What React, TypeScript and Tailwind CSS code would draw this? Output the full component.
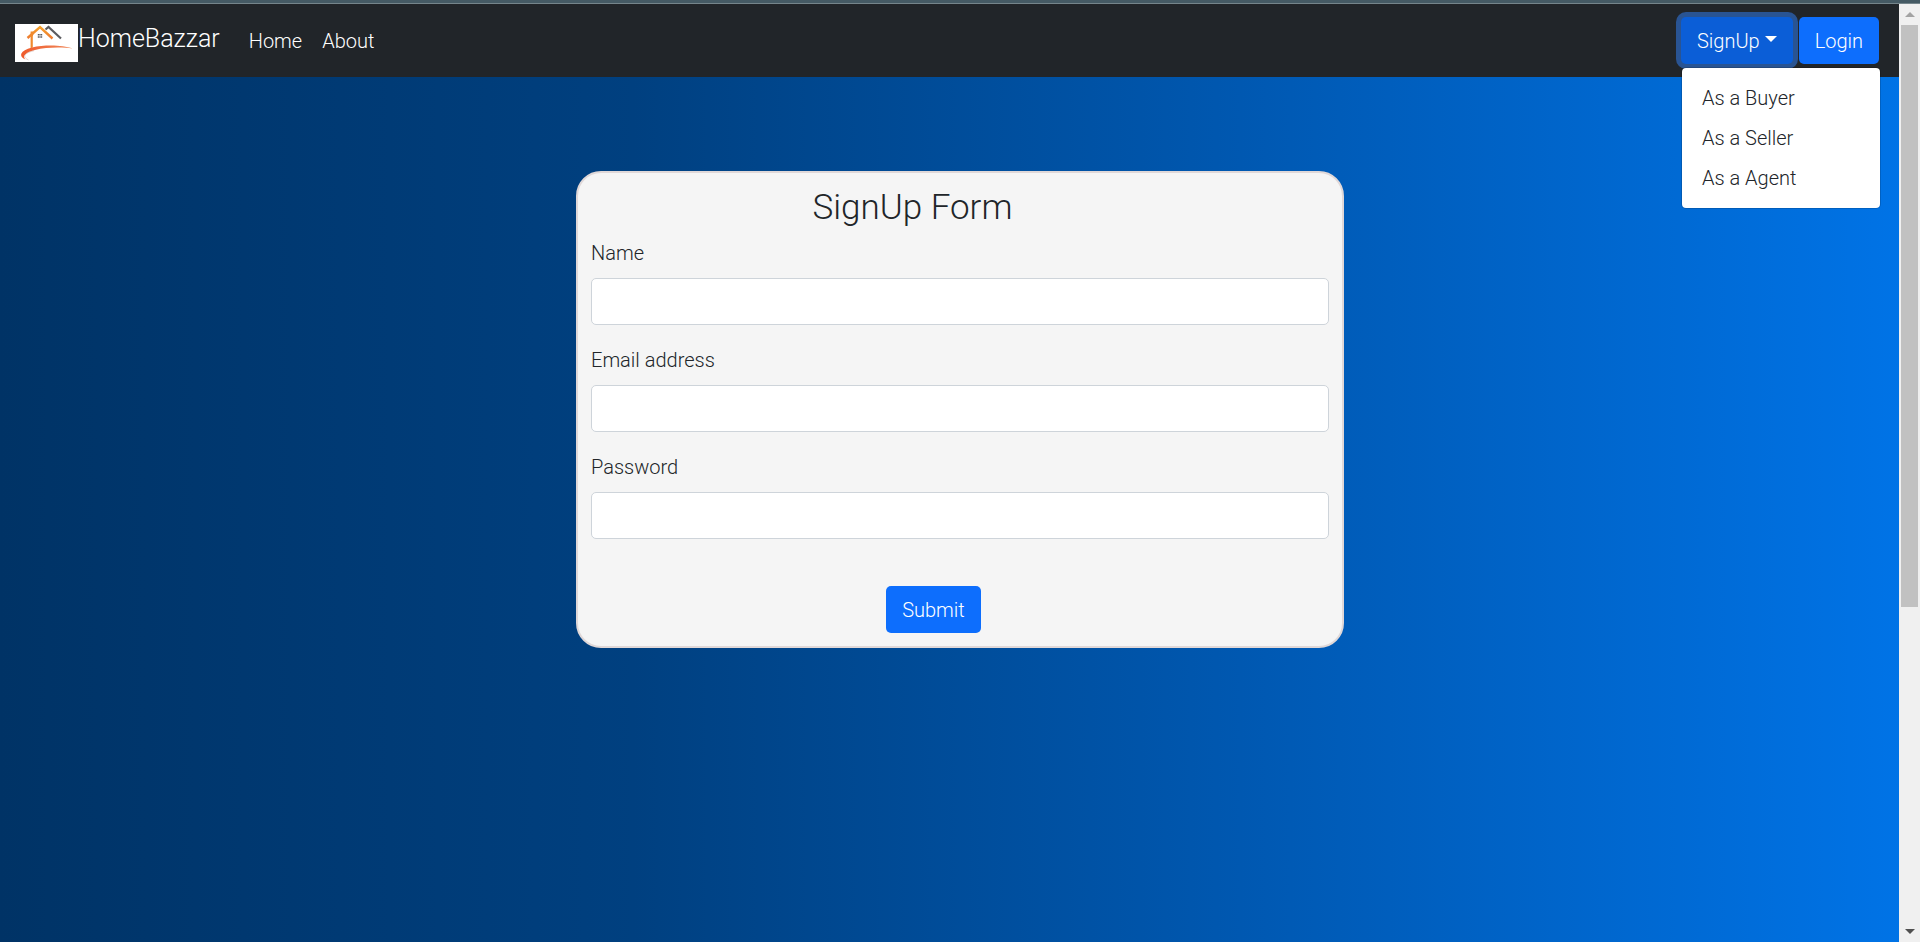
import React from 'react';

const font = "font-['Roboto',sans-serif] font-light";
const primary = 'rounded-[5px] bg-[#0d6efd] px-4 h-[47px] text-xl leading-[30px] font-light text-white';

function Logo() {
  return (
    <svg viewBox="0 0 63 38" className="h-[38px] w-[63px] bg-white" role="img" aria-label="HomeBazzar logo">
      <defs>
        <linearGradient id="roof" x1="0" y1="0" x2="0" y2="1">
          <stop offset="0" stopColor="#f5a02a" />
          <stop offset="1" stopColor="#ee7a30" />
        </linearGradient>
        <linearGradient id="swoosh" x1="0" y1="0" x2="1" y2="0">
          <stop offset="0" stopColor="#ef5a2b" />
          <stop offset="1" stopColor="#f08a5c" />
        </linearGradient>
      </defs>
      <path d="M30.5 5.5 L33.5 3 L46 14.5" fill="none" stroke="#5c5c60" strokeWidth="2.2" />
      <path d="M12.5 14 L25 3 L37.5 14.5" fill="none" stroke="url(#roof)" strokeWidth="2.4" />
      <path d="M15.6 7.5 H18.4 V10 L17.8 12.5 V23.6 L15.6 24.2 Z" fill="#f08a2e" />
      <path d="M22.8 10h1.9v1.6h-1.9zM25.3 10h1.9v1.6h-1.9zM22.8 12.2h1.9v1.6h-1.9zM25.3 12.2h1.9v1.6h-1.9z" fill="#5c5c60" />
      <path d="M10.500 35.5 C3 32 5 26.500 17 23.4 C30 20.5 48 21 57.5 24.4 C46 23 31 23.300 20 25.9 C10 28.5 7 32 10.500 35.5 Z" fill="url(#swoosh)" />
      <path d="M13.500 36 C7 33 9 29 19 26.700" fill="none" stroke="#c9a79c" strokeWidth="0.500" />
    </svg>
  );
}

function Field({ id, label, type }: { id: string; label: string; type: string }) {
  return (
    <div className="mb-5 flex flex-col gap-[10px]">
      <label htmlFor={id} className="text-xl leading-[30px]">{label}</label>
      <input
        id={id}
        type={type}
        className="h-[47px] w-full rounded-[5px] border border-[#ced4da] bg-white px-4 text-xl outline-none"
      />
    </div>
  );
}

export default function App() {
  return (
    <div className={`${font} flex min-h-screen flex-col text-[#212529]`}>
      <div className="h-1 border-b border-[#75858b] bg-[#455a64]" />
      <div className="flex grow">
        <div className="flex min-w-0 grow flex-col bg-[linear-gradient(to_right,#003366,#004080,#0059b3,#0073e6)]">
          <header className="flex h-[73px] items-center bg-[#212529] pl-[15px] pr-5 text-white">
            <a href="#" className="flex items-end">
              <Logo />
              <span className="pb-1 text-[25px] leading-[38px]">HomeBazzar</span>
            </a>
            <nav className="ml-[29px] flex gap-5 text-xl leading-[30px]">
              <a href="#home">Home</a>
              <a href="#about">About</a>
            </nav>
            <div className="relative ml-auto flex gap-[6px]">
              <button
                type="button"
                aria-expanded="true"
                className="flex h-[47px] items-center gap-[5px] rounded-[5px] bg-[#0b5ed7] px-4 text-xl leading-[30px] font-light text-white shadow-[0_0_0_5px_rgba(49,132,253,0.5)]"
              >
                SignUp
                <span className="mb-1 border-x-[6px] border-t-[6px] border-x-transparent border-t-white" />
              </button>
              <button type="button" className={primary}>Login</button>
              <ul className="absolute top-full left-0 mt-[3px] w-[200px] rounded-[5px] border border-black/15 bg-white bg-clip-padding py-[10px] text-xl leading-[30px] text-[#212529]">
                <li><a href="#buyer" className="block px-5 py-[5px]">As a Buyer</a></li>
                <li><a href="#seller" className="block px-5 py-[5px]">As a Seller</a></li>
                <li><a href="#agent" className="block px-5 py-[5px]">As a Agent</a></li>
              </ul>
            </div>
          </header>
          <main className="pt-[94px]">
            <form className="ml-[30vw] w-[40vw] rounded-[25px] border-2 border-[#e0d8d8] bg-[#f5f5f5] p-[13px]">
              <h1 className="mb-2 pl-[30%] text-[35px] leading-[44px]">SignUp Form</h1>
              <Field id="name" label="Name" type="text" />
              <Field id="email" label="Email address" type="email" />
              <Field id="password" label="Password" type="password" />
              <div className="pt-[27px] pl-[40%]">
                <button type="submit" className={primary}>Submit</button>
              </div>
            </form>
          </main>
        </div>
        <div aria-hidden="true" className="flex w-[21px] shrink-0 flex-col items-center bg-[#f0f0f0]">
          <div className="flex h-[21px] items-center">
            <span className="border-x-[5px] border-b-[5px] border-x-transparent border-b-[#a3a3a3]" />
          </div>
          <div className="flex w-[17px] grow flex-col">
            <div className="h-[65%] bg-[#c1c1c1]" />
          </div>
          <div className="flex h-[21px] items-center">
            <span className="border-x-[5px] border-t-[5px] border-x-transparent border-t-[#505050]" />
          </div>
        </div>
      </div>
    </div>
  );
}
